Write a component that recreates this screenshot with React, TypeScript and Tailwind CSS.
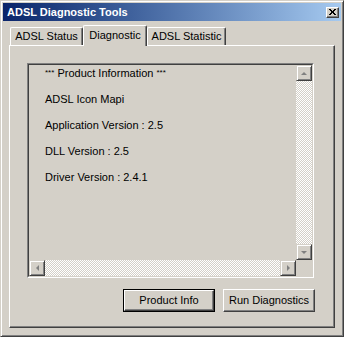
import React from 'react';

const font = { fontFamily: '"Liberation Sans", Arial, sans-serif' };

const checker =
  'bg-[conic-gradient(#ffffff_25%,#d4d0c8_0_50%,#ffffff_0_75%,#d4d0c8_0)] bg-[length:2px_2px]';

const ArrowBtn = ({ dir }: { dir: 'up' | 'down' | 'left' | 'right' }) => {
  const pts = {
    up: '4,1 7,4 1,4',
    down: '1,1 7,1 4,4',
    left: '4,1 4,7 1,4',
    right: '1,1 1,7 4,4',
  }[dir];
  const vertical = dir === 'up' || dir === 'down';
  return (
    <div className="w-[16px] h-[16px] flex items-center justify-center bg-[#d4d0c8] border border-t-[#d4d0c8] border-l-[#d4d0c8] border-r-[#404040] border-b-[#404040] shadow-[inset_1px_1px_#ffffff,inset_-1px_-1px_#808080]">
      <svg width={vertical ? 8 : 5} height={vertical ? 5 : 8} viewBox={vertical ? '0 0 8 5' : '0 0 5 8'}>
        <polygon points={pts} fill="#808080" />
      </svg>
    </div>
  );
};

const Tab = ({ label, active, width }: { label: string; active?: boolean; width: string }) => (
  <div
    className={
      'flex items-center justify-center bg-[#d4d0c8] border-t border-l border-r border-t-white border-l-white border-r-[#404040] rounded-t-[2px] shadow-[inset_-1px_0_#808080] text-[11px] text-black ' +
      width +
      (active ? ' h-[21px] -mb-[1px] relative z-10 pb-[2px]' : ' h-[18px]')
    }
  >
    {label}
  </div>
);

const Stars = () => <span className="text-[8px] align-top leading-[11px]">***</span>;

export default function App() {
  return (
    <div
      style={font}
      className="w-[344px] h-[337px] flex flex-col bg-[#d4d0c8] border border-t-[#d4d0c8] border-l-[#d4d0c8] border-r-[#404040] border-b-[#404040] shadow-[inset_1px_1px_#ffffff,inset_-1px_-1px_#808080] p-[2px] select-none"
    >
      {/* title bar */}
      <div className="h-[18px] flex items-center pl-[4px] pr-[2px] bg-gradient-to-r from-[#0a246a] to-[#a6caf0]">
        <span className="text-white font-bold text-[11px] flex-1">ADSL Diagnostic Tools</span>
        <div className="w-[13px] h-[11px] flex items-center justify-center bg-[#d4d0c8] border border-t-white border-l-white border-r-[#404040] border-b-[#404040] shadow-[inset_-1px_-1px_#808080]">
          <svg width="7" height="6" viewBox="0 0 7 6">
            <path d="M0 0 L6 6 M1 0 L7 6 M6 0 L0 6 M7 0 L1 6" stroke="#000" strokeWidth="1" />
          </svg>
        </div>
      </div>

      {/* body */}
      <div className="flex-1 flex flex-col pt-[4px] px-[6px] pb-[6px]">
        <div className="h-[20px] flex items-end pl-[1px]">
          <Tab label="ADSL Status" width="w-[73px]" />
          <Tab label="Diagnostic" width="w-[64px]" active />
          <Tab label="ADSL Statistic" width="w-[79px]" />
        </div>

        <div className="flex-1 flex flex-col border border-t-white border-l-white border-r-[#404040] border-b-[#404040] shadow-[inset_-1px_-1px_#808080] pt-[17px] pl-[17px]">
          {/* read-only edit */}
          <div className="w-[287px] h-[215px] border border-t-[#808080] border-l-[#808080] border-r-white border-b-white">
            <div className="w-full h-full border border-t-[#404040] border-l-[#404040] border-r-[#d4d0c8] border-b-[#d4d0c8] grid grid-cols-[1fr_16px] grid-rows-[1fr_16px]">
              <div className="bg-[#d4d0c8] pt-[2px] pl-[16px] overflow-hidden text-[11px] leading-[13px] text-black whitespace-nowrap">
                <div className="h-[26px]">
                  <Stars /> Product Information <Stars />
                </div>
                <div className="h-[26px]">ADSL Icon Mapi</div>
                <div className="h-[26px]">Application Version : 2.5</div>
                <div className="h-[26px]">DLL Version : 2.5</div>
                <div className="h-[26px]">Driver Version : 2.4.1</div>
              </div>
              <div className="flex flex-col">
                <ArrowBtn dir="up" />
                <div className={'flex-1 ' + checker} />
                <ArrowBtn dir="down" />
              </div>
              <div className="flex">
                <ArrowBtn dir="left" />
                <div className={'flex-1 ' + checker} />
                <ArrowBtn dir="right" />
              </div>
              <div className="bg-[#d4d0c8]" />
            </div>
          </div>

          <div className="w-[288px] flex justify-end gap-[8px] mt-[11px]">
            <button className="w-[92px] h-[23px] border border-black bg-[#d4d0c8] p-0">
              <div className="w-full h-full flex items-center justify-center text-[11px] text-black border border-t-white border-l-white border-r-[#404040] border-b-[#404040] shadow-[inset_-1px_-1px_#808080]">
                Product Info
              </div>
            </button>
            <button className="w-[92px] h-[23px] flex items-center justify-center text-[11px] text-black bg-[#d4d0c8] border border-t-white border-l-white border-r-[#404040] border-b-[#404040] shadow-[inset_-1px_-1px_#808080]">
              Run Diagnostics
            </button>
          </div>
        </div>
      </div>
    </div>
  );
}
